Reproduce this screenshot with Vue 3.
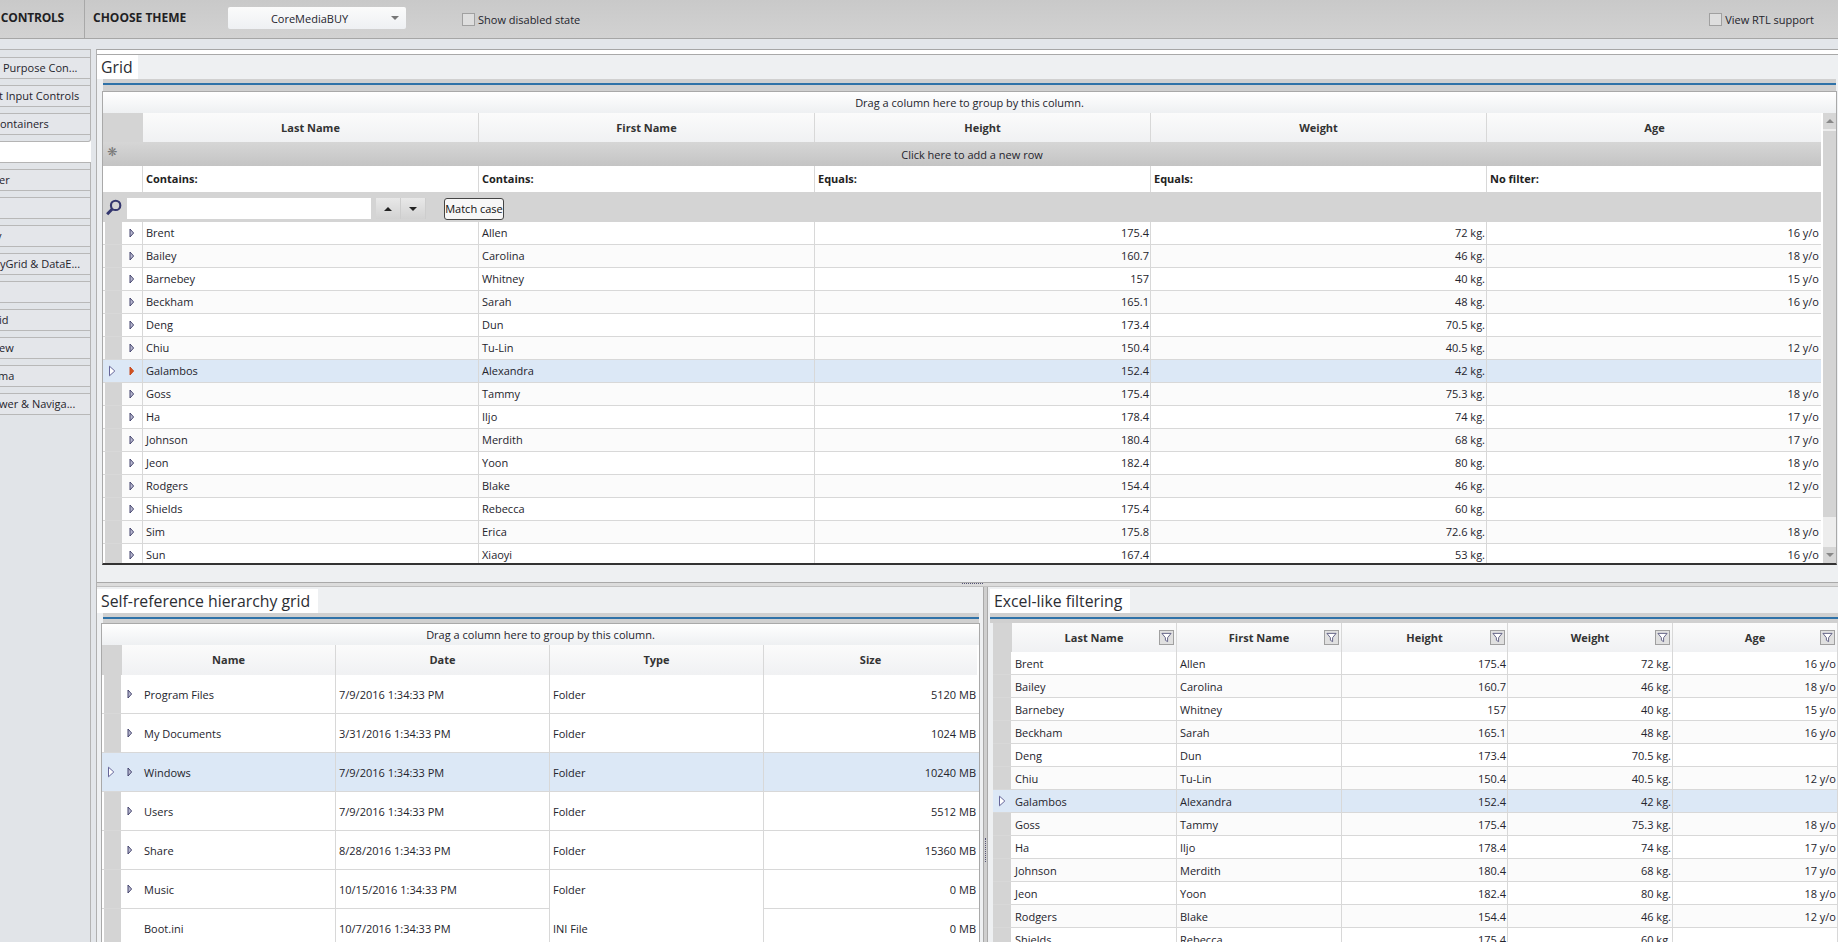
<script setup>
const navTop = [
  { t: 'Purpose Con...', x: 3 },
  { t: 't Input Controls', x: -1 },
  { t: 'ontainers', x: 0 }
]
const navBottom = [
  { t: 'er', x: -1 }, { t: '', x: 0 }, { t: 'v', x: -4 },
  { t: 'yGrid & DataE...', x: 0 }, { t: '', x: 0 }, { t: 'id', x: -1 },
  { t: 'ew', x: -1 }, { t: 'ma', x: -2 }, { t: 'wer & Naviga...', x: -1 }
]
const people = [
  ['Brent', 'Allen', '175.4', '72 kg.', '16 y/o'],
  ['Bailey', 'Carolina', '160.7', '46 kg.', '18 y/o'],
  ['Barnebey', 'Whitney', '157', '40 kg.', '15 y/o'],
  ['Beckham', 'Sarah', '165.1', '48 kg.', '16 y/o'],
  ['Deng', 'Dun', '173.4', '70.5 kg.', ''],
  ['Chiu', 'Tu-Lin', '150.4', '40.5 kg.', '12 y/o'],
  ['Galambos', 'Alexandra', '152.4', '42 kg.', ''],
  ['Goss', 'Tammy', '175.4', '75.3 kg.', '18 y/o'],
  ['Ha', 'Iljo', '178.4', '74 kg.', '17 y/o'],
  ['Johnson', 'Merdith', '180.4', '68 kg.', '17 y/o'],
  ['Jeon', 'Yoon', '182.4', '80 kg.', '18 y/o'],
  ['Rodgers', 'Blake', '154.4', '46 kg.', '12 y/o'],
  ['Shields', 'Rebecca', '175.4', '60 kg.', ''],
  ['Sim', 'Erica', '175.8', '72.6 kg.', '18 y/o'],
  ['Sun', 'Xiaoyi', '167.4', '53 kg.', '16 y/o']
]
const heads = ['Last Name', 'First Name', 'Height', 'Weight', 'Age']
const filters = ['Contains:', 'Contains:', 'Equals:', 'Equals:', 'No filter:']
const tree = [
  ['Program Files', '7/9/2016 1:34:33 PM', 'Folder', '5120 MB', true],
  ['My Documents', '3/31/2016 1:34:33 PM', 'Folder', '1024 MB', true],
  ['Windows', '7/9/2016 1:34:33 PM', 'Folder', '10240 MB', true],
  ['Users', '7/9/2016 1:34:33 PM', 'Folder', '5512 MB', true],
  ['Share', '8/28/2016 1:34:33 PM', 'Folder', '15360 MB', true],
  ['Music', '10/15/2016 1:34:33 PM', 'Folder', '0 MB', true],
  ['Boot.ini', '10/7/2016 1:34:33 PM', 'INI File', '0 MB', false]
]
</script>

<template>
  <div class="page">
    <header class="topbar">
      <div class="brand">CONTROLS</div>
      <div class="theme-label">CHOOSE THEME</div>
      <div class="combo"><span class="combo-text">CoreMediaBUY</span><span class="combo-arrow"></span></div>
      <label class="check check-disabled"><span class="box"></span>Show disabled state</label>
      <label class="check check-rtl"><span class="box"></span>View RTL support</label>
    </header>
    <div class="body">
      <aside class="nav">
        <div class="nav-card nav-card-top">
          <div v-for="n in navTop" :key="n.t" class="nav-item"><span :style="{ marginLeft: n.x + 'px' }">{{ n.t }}</span></div>
        </div>
        <div class="nav-card nav-card-bottom">
          <div v-for="(n, i) in navBottom" :key="i" class="nav-item"><span :style="{ marginLeft: n.x + 'px' }">{{ n.t }}</span></div>
        </div>
      </aside>
      <main class="content">
        <section class="panel grid-panel">
          <div class="title-row"><h2 class="title">Grid</h2></div>
          <div class="rule"></div>
          <div class="grid main-grid">
            <div class="group-bar">Drag a column here to group by this column.</div>
            <div class="grid-frame">
              <div class="grid-table">
                <div class="row head-row">
                  <div class="corner"></div>
                  <div v-for="h in heads" :key="h" class="cell head">{{ h }}</div>
                </div>
                <div class="add-row"><span class="gear">❋</span>Click here to add a new row</div>
                <div class="row filter-row">
                  <div class="corner blank"></div>
                  <div v-for="(f, i) in filters" :key="i" class="cell filter">{{ f }}</div>
                </div>
                <div class="search-row">
                  <svg class="loupe" viewBox="0 0 16 16"><circle cx="10" cy="6" r="4.4" fill="none" stroke="#33366e" stroke-width="2"/><path d="M6.6 9.6 2 14.4" stroke="#33366e" stroke-width="2.8"/></svg>
                  <div class="search-input"></div>
                  <div class="updown"><span class="ud-btn"><i class="up"></i></span><span class="ud-btn"><i class="down"></i></span></div>
                  <div class="match">Match case</div>
                </div>
                <div class="rows-main">
                  <div v-for="(p, i) in people" :key="i" class="row data-row" :class="{ alt: i % 2, sel: p[0] === 'Galambos' }">
                    <div class="indicator">
                      <svg v-if="p[0] === 'Galambos'" class="cur" viewBox="0 0 8 12"><path d="M1.5 1.2 6.8 6 1.5 10.8z" fill="#fff" stroke="#66669a"/></svg>
                    </div>
                    <div class="expander">
                      <svg class="tri" viewBox="0 0 6 10"><path d="M1 1 4.6 5 1 9z" :fill="p[0] === 'Galambos' ? '#d2531f' : '#b8b8d0'" :stroke="p[0] === 'Galambos' ? '#c8491e' : '#45456e'"/></svg>
                    </div>
                    <div class="cell">{{ p[0] }}</div>
                    <div class="cell">{{ p[1] }}</div>
                    <div class="cell num">{{ p[2] }}</div>
                    <div class="cell num">{{ p[3] }}</div>
                    <div class="cell num">{{ p[4] }}</div>
                  </div>
                </div>
              </div>
              <div class="scrollbar">
                <span class="sb-btn"><i class="sb-up"></i></span>
                <span class="sb-track"><b class="sb-thumb"></b></span>
                <span class="sb-btn"><i class="sb-down"></i></span>
              </div>
            </div>
          </div>
        </section>
        <div class="h-split"><span class="dots"></span></div>
        <div class="lower">
          <section class="panel tree-panel">
            <div class="title-row"><h2 class="title">Self-reference hierarchy grid</h2></div>
            <div class="rule"></div>
            <div class="grid tree-grid">
              <div class="group-bar short">Drag a column here to group by this column.</div>
              <div class="row tree-head">
                <div class="corner"></div>
                <div class="cell head">Name</div>
                <div class="cell head">Date</div>
                <div class="cell head">Type</div>
                <div class="cell head">Size</div>
              </div>
              <div v-for="t in tree" :key="t[0]" class="row tree-row" :class="{ sel: t[0] === 'Windows', 'no-type-line': t[0] === 'Music' }">
                <div class="indicator">
                  <svg v-if="t[0] === 'Windows'" class="cur" viewBox="0 0 8 12"><path d="M1.5 1.2 6.8 6 1.5 10.8z" fill="#fff" stroke="#66669a"/></svg>
                </div>
                <div class="cell name-cell">
                  <svg class="tri" :class="{ hidden: !t[4] }" viewBox="0 0 6 10"><path d="M1 1 4.6 5 1 9z" fill="#b8b8d0" stroke="#45456e"/></svg>
                  <span class="name">{{ t[0] }}</span>
                </div>
                <div class="cell">{{ t[1] }}</div>
                <div class="cell type-cell">{{ t[2] }}</div>
                <div class="cell num">{{ t[3] }}</div>
              </div>
            </div>
          </section>
          <div class="v-split"><div class="v-bar"><span class="vdots"></span></div></div>
          <section class="panel excel-panel">
            <div class="title-row"><h2 class="title">Excel-like filtering</h2></div>
            <div class="rule"></div>
            <div class="grid excel-grid">
              <div class="row excel-head">
                <div class="corner"></div>
                <div v-for="h in heads" :key="h" class="cell head">
                  <span>{{ h }}</span>
                  <span class="fbtn"><svg viewBox="0 0 12 12"><path d="M1 1.5h10L7.2 6.2v4.3L4.8 9V6.2z" fill="#fff" stroke="#5a5a80"/></svg></span>
                </div>
              </div>
              <div v-for="(p, i) in people" :key="i" class="row excel-row" :class="{ alt: i % 2, sel: p[0] === 'Galambos' }">
                <div class="indicator">
                  <svg v-if="p[0] === 'Galambos'" class="cur" viewBox="0 0 8 12"><path d="M1.5 1.2 6.8 6 1.5 10.8z" fill="#fff" stroke="#66669a"/></svg>
                </div>
                <div class="cell">{{ p[0] }}</div>
                <div class="cell">{{ p[1] }}</div>
                <div class="cell num">{{ p[2] }}</div>
                <div class="cell num">{{ p[3] }}</div>
                <div class="cell num">{{ p[4] }}</div>
              </div>
            </div>
          </section>
        </div>
      </main>
    </div>
  </div>
</template>

<style>
html, body { margin: 0; height: 100%; overflow: hidden; background: #fff; }
</style>

<style scoped>
.page { width: 1838px; height: 942px; overflow: hidden; display: flex; flex-direction: column; font-family: "Open Sans", "Noto Sans", sans-serif; font-size: 11px; color: #24242c; background: #e3e6ea; }
.topbar { height: 38px; flex: none; display: flex; align-items: center; position: relative; background: linear-gradient(#c9c9c9, #d2d2d2); border-bottom: 1px solid #a6a6a6; }
.brand { width: 85px; box-sizing: border-box; height: 38px; line-height: 35px; text-align: right; padding-right: 20px; border-right: 1px solid #a8a8a8; font-weight: 700; font-size: 12px; letter-spacing: -0.2px; color: #1f1f24; }
.theme-label { margin-left: 8px; width: 135px; font-weight: 700; font-size: 12px; color: #1f1f24; margin-top: -3px; }
.combo { width: 178px; height: 22px; background: linear-gradient(#fbfbfb, #eef0f3); border-radius: 2px; display: flex; align-items: center; margin-top: -2px; }
.combo-text { flex: 1; text-align: center; }
.combo-arrow { width: 0; height: 0; border: 4px solid transparent; border-top: 4px solid #777; border-bottom: 0; margin-right: 7px; }
.check { display: flex; align-items: center; gap: 3px; font-size: 11px; margin-top: 1px; }
.check-disabled { margin-left: 56px; }
.check-rtl { margin-left: auto; margin-right: 24px; }
.box { width: 11px; height: 11px; border: 1px solid #a0a0a0; background: #dedede; display: inline-block; }
.body { flex: 1; display: flex; min-height: 0; padding-top: 10px; }
.nav { width: 91px; flex: none; display: flex; flex-direction: column; background: #fff; }
.nav-card { background: #e1e4e8; border-top: 1px solid #b4b4b4; border-right: 1px solid #b4b4b4; }
.nav-card-top { flex: none; height: 93px; box-sizing: border-box; padding-top: 7px; border-bottom: 1px solid #b4b4b4; border-radius: 0 0 3px 0; margin-bottom: 20px; }
.nav-card-bottom { flex: 1; padding-top: 6px; }
.nav-item { height: 22px; box-sizing: border-box; margin-bottom: 6px; padding-bottom: 2px; border-top: 1px solid #b8b8b8; border-bottom: 1px solid #b8b8b8; display: flex; align-items: center; overflow: hidden; white-space: nowrap; background: #e4e6ea; }
.nav-item span { flex: none; }
.content { flex: 1; min-width: 0; margin-left: 5px; display: flex; flex-direction: column; border-left: 1px solid #b0b0b0; border-top: 1px solid #a6a6a6; padding-top: 4px; background: #fff; }
.panel { background: #eef0f2; border-top: 1px solid #a9a9a9; position: relative; }
.grid-panel { height: 528px; flex: none; box-sizing: border-box; }
.title-row { height: 24px; display: flex; }
.title { margin: 0; background: #fff; font-weight: 400; font-size: 15.8px; line-height: 24px; height: 24px; padding: 0 8px 0 4px; color: #2b2d33; }
.grid-panel .title { padding-right: 5px; }
.rule { height: 2px; background: #2f72a8; border-top: 4px solid #d0d0d0; border-bottom: 6px solid #d0d0d0; margin-left: 6px; margin-right: 2px; }
.grid { background: #fff; }
.main-grid { margin-left: 5px; width: 1735px; border: 1px solid #a9a9a9; border-bottom: 2px solid #333; height: 474px; box-sizing: border-box; overflow: hidden; }
.group-bar { height: 21px; line-height: 21px; text-align: center; background: linear-gradient(#fff, #eef0f2); }
.grid-frame { display: flex; height: 450px; }
.grid-table { width: 1718px; flex: none; overflow: hidden; }
.row { display: flex; }
.corner { width: 40px; flex: none; background: #d4d4d4; }
.corner.blank { background: #fff; border-right: 1px solid #d8d8d8; box-sizing: border-box; }
.cell { flex: none; box-sizing: border-box; padding: 0 3px; white-space: nowrap; overflow: hidden; border-right: 1px solid #d8d8d8; display: flex; align-items: center; }
.head { justify-content: center; font-weight: 700; background: linear-gradient(#fbfbfb, #f0f1f3); color: #333; padding-bottom: 1px; }
.num { justify-content: flex-end; padding-right: 1px; }
.head-row { height: 29px; }
.main-grid .cell { width: 336px; }
.main-grid .cell:last-child { width: 334px; border-right: 0; padding-right: 2px; }
.add-row { height: 24px; box-sizing: border-box; padding-left: 20px; background: linear-gradient(#d6d6d6, #c4c4c4); display: flex; align-items: center; justify-content: center; position: relative; }
.gear { position: absolute; left: 4px; top: 3px; font-size: 12px; color: #777; font-family: "DejaVu Sans", sans-serif; }
.filter-row { height: 26px; background: #fff; }
.filter { font-weight: 700; color: #222; background: #fff; padding-bottom: 2px; }
.search-row { height: 30px; box-sizing: border-box; background: #d4d4d4; display: flex; align-items: flex-start; padding-top: 6px; }
.loupe { width: 17px; height: 17px; margin-left: 2px; margin-top: 1px; flex: none; }
.search-input { width: 244px; height: 21px; background: #fff; margin-left: 5px; flex: none; }
.updown { width: 50px; height: 21px; margin-left: 5px; flex: none; display: flex; }
.ud-btn { flex: 1; display: flex; align-items: center; justify-content: center; background: linear-gradient(#e8e8e8, #d2d2d2); border-right: 1px solid #cdcdcd; }
.up { border: 4px solid transparent; border-bottom: 4px solid #222; border-top: 0; }
.down { border: 4px solid transparent; border-top: 4px solid #222; border-bottom: 0; }
.match { margin-left: 18px; height: 22px; line-height: 20px; width: 60px; box-sizing: border-box; text-align: center; border: 1px solid #444; border-radius: 3px; background: #f7f7f7; color: #111; }
.rows-main { height: 341px; overflow: hidden; }
.data-row { height: 23px; box-sizing: border-box; border-bottom: 1px solid #d8d8d8; background: #fff; }
.data-row .cell { padding-bottom: 2px; }
.data-row.alt, .excel-row.alt { background: #fbfbfb; }
.row.sel { background: #dce8f6; }
.indicator { width: 20px; flex: none; background: #d4d4d4; background-clip: padding-box; border-left: 2px solid transparent; border-right: 1px solid transparent; box-sizing: border-box; display: flex; align-items: center; justify-content: center; padding-right: 3px; }
.row.sel .indicator { background: #dce8f6; }
.expander { width: 20px; flex: none; display: flex; align-items: center; justify-content: center; padding-right: 2px; border-right: 1px solid #d8d8d8; box-sizing: border-box; }
.tri { width: 6px; height: 10px; flex: none; }
.tri.hidden { visibility: hidden; }
.cur { width: 8px; height: 12px; flex: none; }
.scrollbar { flex: 1; display: flex; flex-direction: column; background: #ededed; margin-left: 2px; }
.sb-btn { height: 16px; background: #d6d6d6; display: flex; align-items: center; justify-content: center; flex: none; }
.sb-track { flex: 1; background: #ededed; display: block; padding-top: 2px; }
.sb-thumb { display: block; height: 386px; background: #d4d4d4; }
.sb-up { border: 4px solid transparent; border-bottom: 4px solid #888; border-top: 0; }
.sb-down { border: 4px solid transparent; border-top: 4px solid #888; border-bottom: 0; }
.h-split { height: 3px; flex: none; background: #dcdcdc; border-top: 1px solid #a9a9a9; border-bottom: 1px solid #c0c0c0; position: relative; }
.dots { position: absolute; left: 865px; top: 0; width: 21px; border-top: 1px dotted #557; }
.lower { flex: 1; display: flex; min-height: 0; background: #eef0f2; }
.tree-panel { width: 882px; flex: none; border-top: 0; }
.tree-panel .title-row, .excel-panel .title-row { height: 26px; padding-top: 2px; box-sizing: border-box; }
.tree-panel .rule, .excel-panel .rule { border-bottom-width: 4px; margin-right: 0; }
.excel-panel .rule { margin-left: 0; }
.tree-grid { margin-left: 4px; width: 877px; border-left: 1px solid #a9a9a9; border-right: 1px solid #a9a9a9; }
.group-bar.short { height: 22px; line-height: 22px; border-top: 1px solid #a9a9a9; box-sizing: border-box; }
.tree-head { height: 30px; }
.tree-head .corner { width: 20px; }
.tree-grid .cell { width: 214px; }
.tree-grid .cell:nth-child(5) { width: 213px; border-right: 0; }
.tree-grid .tree-row .name-cell { padding-left: 5px; }
.tree-row { height: 39px; box-sizing: border-box; border-bottom: 1px solid #d8d8d8; background: #fff; }
.name { margin-left: 11px; }
.no-type-line .type-cell { position: relative; overflow: visible; }
.no-type-line .type-cell::after { content: ""; position: absolute; left: 0; right: 0; bottom: -1px; height: 1px; background: #fff; z-index: 1; }
.v-split { width: 11px; flex: none; box-sizing: border-box; padding: 0 2px 0 4px; background: #eef0f2; }
.v-bar { height: 100%; box-sizing: border-box; border-left: 1px solid #a9a9a9; border-right: 1px solid #a9a9a9; background: #cfcfcf; position: relative; }
.vdots { position: absolute; left: 1px; top: 251px; height: 24px; border-left: 1px dotted #557; }
.excel-panel { flex: 1; min-width: 0; border-top: 0; overflow: hidden; }
.excel-grid { margin-left: 3px; width: 900px; }
.excel-head { height: 29px; }
.excel-head .corner { width: 19px; }
.excel-grid .cell { width: 165px; padding-left: 3px; }
.excel-grid .cell:nth-child(4) { width: 166px; }
.excel-head .cell { position: relative; }
.fbtn { position: absolute; right: 2px; top: 7px; width: 15px; height: 15px; box-sizing: border-box; border: 1px solid #a0a0a0; background: #e0e0e0; display: flex; align-items: center; justify-content: center; }
.fbtn svg { width: 11px; height: 11px; }
.excel-row { height: 23px; box-sizing: border-box; border-bottom: 1px solid #d8d8d8; background: #fff; }
.excel-row .indicator { width: 19px; border-left: 0; padding-right: 0; }
</style>
